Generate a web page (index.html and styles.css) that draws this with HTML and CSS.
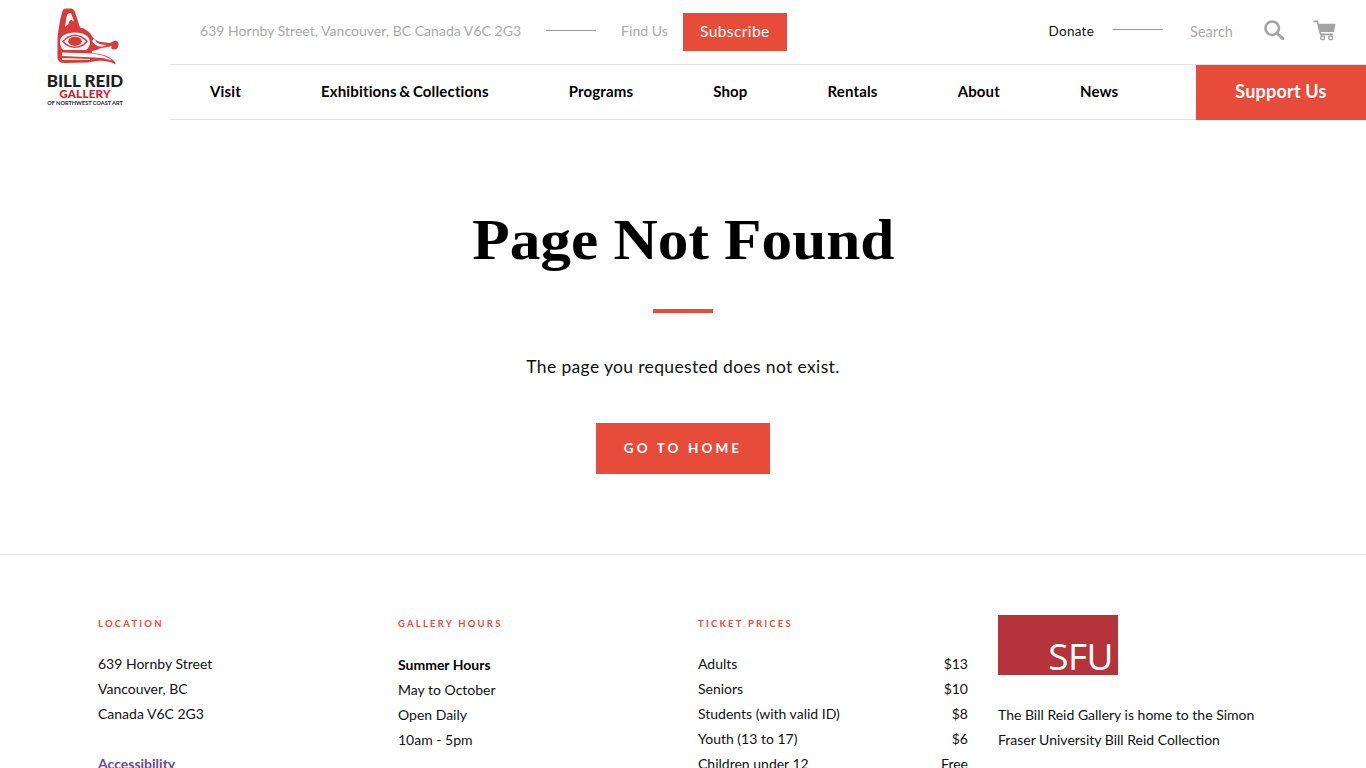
FILE: index.html
```html
<!DOCTYPE html>
<html lang="en">
<head>
<meta charset="utf-8">
<title>Page Not Found - Bill Reid Gallery</title>
<link rel="stylesheet" href="styles.css">
</head>
<body>
<header class="site-header">
  <a class="logo" href="#">
    <svg class="logo-svg" viewBox="40 0 90 112" width="90" height="112" aria-label="Bill Reid Gallery of Northwest Coast Art">
      <path class="logo-red" d="M62.5 11 Q63 8.5 66 8.5 L71.5 8.5 Q74 9 75 12 L80 27.5 Q88 29 92 36 Q95 41 101 42 L110 43 Q118 38 118.5 44 Q118.5 50 113 49.5 Q110 48.5 112 46 Q106 47.5 101 48 Q97 50.5 92 51 L92 53 L100 54 Q110 56 115 62 L115.5 64.5 Q108 60 96 61 L88 62.5 L65 63 Q58 63 57.5 58 L57.5 38 Q59 22 62.5 11 Z"/>
      <path class="logo-white" d="M65 27 L66.5 17 Q67.5 12.5 71 13 L74 21.5 L71.5 20 Q69 20 68.5 24 Z"/>
      <path class="logo-white" d="M60 41 Q61 33 75 32.5 Q89 33 90 42 Q90 47 86 50 L63 50 Q60 47 60 41 Z"/>
      <path class="logo-red" d="M62 41.5 Q68 34.5 75 34.5 Q83 35 88 41.5 Q83 48 75 48 Q67 48 62 41.5 Z"/>
      <path class="logo-white" d="M64 41.5 Q69 36 75 36 Q81 36 86 41.5 Q81 46.5 75 46.5 Q69 46.5 64 41.5 Z"/>
      <ellipse class="logo-red" cx="75" cy="41.3" rx="6.8" ry="4.6"/>
      <path class="logo-white" d="M62 52.5 L92 53.5 L101 55 Q108 57 112 60.5 Q104 57.5 95 57.5 L62 56 Z"/>
      <path class="logo-white" d="M62 58 L90 59 L90 60 L62 60 Z"/>
      <path class="logo-white" d="M94 38 Q96 43 101 44.5 L107 45 L102 46.5 Q96 47 92 41 Z"/>
      <text class="logo-t1" x="85" y="86.5">BILL REID</text>
      <text class="logo-t2" x="85" y="97.5">GALLERY</text>
      <text class="logo-t3" x="85" y="105">OF NORTHWEST COAST ART</text>
    </svg>
  </a>
  <div class="header-main">
    <div class="top-bar">
      <div class="top-group">
        <span class="top-muted">639 Hornby Street, Vancouver, BC Canada V6C 2G3</span>
        <span class="top-rule"></span>
        <a class="top-muted" href="#">Find Us</a>
        <a class="subscribe" href="#">Subscribe</a>
      </div>
      <div class="top-group top-right">
        <a class="donate" href="#">Donate</a>
        <span class="top-rule rule-right"></span>
        <span class="search-label">Search</span>
        <svg class="icon-search" viewBox="0 0 22 22" width="20" height="20" aria-hidden="true">
          <circle cx="9" cy="9" r="7.4"/>
          <path d="M14.5 14.5 L20.5 20.5"/>
        </svg>
        <svg class="icon-cart" viewBox="0 0 24 22" width="23" height="21" aria-hidden="true">
          <path class="cart-handle" d="M0.5 1.5 H4.5 L8 15 H21"/>
          <path class="cart-body" d="M5.5 4 H23.5 L22 12.5 H7.5 Z"/>
          <circle class="cart-wheel" cx="10" cy="18.5" r="2"/>
          <circle class="cart-wheel" cx="18.5" cy="18.5" r="2"/>
        </svg>
      </div>
    </div>
    <nav class="main-nav">
      <div class="nav-links">
        <a href="#">Visit</a>
        <a href="#">Exhibitions &amp; Collections</a>
        <a href="#">Programs</a>
        <a href="#">Shop</a>
        <a href="#">Rentals</a>
        <a href="#">About</a>
        <a href="#">News</a>
      </div>
      <a class="support" href="#">Support Us</a>
    </nav>
  </div>
</header>
<main class="not-found">
  <h1>Page Not Found</h1>
  <div class="accent-rule"></div>
  <p>The page you requested does not exist.</p>
  <a class="home-btn" href="#">Go to home</a>
</main>
<footer class="site-footer">
  <section class="foot-col">
    <h2>Location</h2>
    <ul class="foot-list">
      <li>639 Hornby Street</li>
      <li>Vancouver, BC</li>
      <li>Canada V6C 2G3</li>
    </ul>
    <a class="access" href="#">Accessibility</a>
  </section>
  <section class="foot-col">
    <h2>Gallery Hours</h2>
    <ul class="foot-list hours">
      <li class="strong">Summer Hours</li>
      <li>May to October</li>
      <li>Open Daily</li>
      <li>10am - 5pm</li>
    </ul>
  </section>
  <section class="foot-col">
    <h2>Ticket Prices</h2>
    <ul class="foot-list prices">
      <li><span>Adults</span><span>$13</span></li>
      <li><span>Seniors</span><span>$10</span></li>
      <li><span>Students (with valid ID)</span><span>$8</span></li>
      <li><span>Youth (13 to 17)</span><span>$6</span></li>
      <li><span>Children under 12</span><span>Free</span></li>
    </ul>
  </section>
  <section class="foot-col">
    <div class="sfu"><span>SFU</span></div>
    <p class="foot-note">The Bill Reid Gallery is home to the Simon Fraser University Bill Reid Collection</p>
  </section>
</footer>
</body>
</html>
```
FILE: styles.css
```css
* { box-sizing: border-box; }
html, body { margin: 0; padding: 0; }
body {
  height: 768px;
  overflow: hidden;
  background: #fff;
  color: #000;
  font-family: "Lato", "Liberation Sans", sans-serif;
}
a { color: inherit; text-decoration: none; }

.site-header { display: flex; height: 120px; }
.logo { width: 170px; flex: none; display: flex; padding-left: 40px; }
.logo-svg { display: block; }
.logo-red { fill: #d93a3a; }
.logo-white { fill: #fff; }
.logo-svg text { text-anchor: middle; }
.logo-t1 { font: 900 17px "Lato", sans-serif; fill: #1d1d1b; }
.logo-t2 { font: 900 11.5px "Lato", sans-serif; letter-spacing: 0.3px; fill: #c8202f; }
.logo-t3 { font: 700 5.6px "Lato", sans-serif; fill: #1d1d1b; }

.header-main { flex: 1; display: flex; flex-direction: column; }
.top-bar {
  height: 65px;
  border-bottom: 1px solid #e2e2e2;
  display: flex;
  justify-content: space-between;
  padding: 0 30px;
  align-items: center;
}
.top-group { display: flex; align-items: center; }
.top-muted { font-size: 14px; line-height: 18px; color: #a9a9a9; letter-spacing: 0.03px; margin-top: -3px; }
.top-rule { width: 50px; height: 1px; background: #999; margin: -3px 25px 0; }
.subscribe {
  margin-left: 15px;
  width: 104px;
  height: 38px;
  background: #e74c3a;
  color: #fff;
  font-size: 15.5px;
  display: flex;
  align-items: center;
  justify-content: center;
  letter-spacing: 0.4px;
  padding-bottom: 2px;
}
.top-right { padding-bottom: 2px; }
.donate { font-size: 13.5px; color: #111; letter-spacing: 0.25px; }
.rule-right { margin: -3px 27px 0 19px; }
.search-label { font-size: 14.4px; color: #aaa; margin-right: 31px; letter-spacing: 0.1px; }
.icon-search { margin-right: 29px; margin-top: -2px; fill: none; stroke: #a3a3a3; stroke-width: 2.8; }
.icon-search path { stroke-linecap: round; stroke-width: 3.2; }
.icon-cart { margin-top: -2px; }
.cart-handle { fill: none; stroke: #a3a3a3; stroke-width: 1.8; }
.cart-body { fill: #a3a3a3; }
.cart-wheel { fill: none; stroke: #a3a3a3; stroke-width: 1.4; }

.main-nav {
  height: 55px;
  border-bottom: 1px solid #e2e2e2;
  display: flex;
  justify-content: space-between;
  align-items: stretch;
}
.nav-links { display: flex; align-items: center; padding-bottom: 2px; }
.nav-links a { padding: 0 40px; font-size: 15px; font-weight: 700; color: #000; letter-spacing: 0.15px; word-spacing: -1.2px; }
.support {
  width: 170px;
  margin-bottom: -1px;
  background: #e74c3a;
  color: #fff;
  font-size: 18px;
  font-weight: 700;
  letter-spacing: 0.2px;
  padding-bottom: 4px;
  display: flex;
  align-items: center;
  justify-content: center;
}

.not-found {
  height: 435px;
  border-bottom: 1px solid #ececec;
  display: flex;
  flex-direction: column;
  align-items: center;
  padding-top: 85px;
}
.not-found h1 {
  margin: 0;
  font: 700 57px/70px "Liberation Serif", serif;
  transform: scaleX(1.075);
  color: #000;
}
.accent-rule { width: 60px; height: 4px; background: #e74c3a; margin-top: 34px; }
.not-found p { margin: 42px 0 0; font-size: 17.5px; line-height: 24px; letter-spacing: 0.35px; color: #111; }
.home-btn {
  margin-top: 44px;
  width: 174px;
  height: 51px;
  background: #e74c3a;
  color: #fff;
  font-size: 13.5px;
  font-weight: 700;
  letter-spacing: 3.1px;
  text-transform: uppercase;
  padding-bottom: 2px;
  display: flex;
  align-items: center;
  justify-content: center;
}

.site-footer { display: flex; padding: 60px 98px 0; }
.foot-col { flex: none; width: 300px; padding-right: 30px; font-size: 14px; color: #111; }
.foot-col h2 {
  margin: 4px 0 0;
  font-size: 9.5px;
  line-height: 10px;
  font-weight: 700;
  letter-spacing: 2.2px;
  text-transform: uppercase;
  color: #e74c3a;
}
.foot-list { list-style: none; margin: 22px 0 0; padding: 0; }
.foot-list li { height: 25px; line-height: 25px; }
.hours { margin-top: 23px; }
.strong { font-weight: 700; color: #000; }
.prices li { display: flex; justify-content: space-between; }
.access { display: block; margin-top: 25px; font-weight: 700; color: #6b4a96; line-height: 25px; }
.sfu {
  width: 120px;
  height: 60px;
  background: #b5333a;
  color: #fff;
  display: flex;
  align-items: flex-end;
  justify-content: flex-end;
  padding-right: 5px;
  overflow: hidden;
}
.sfu span { font: 400 37px/44px "Open Sans", sans-serif; margin-bottom: -3px; letter-spacing: -0.5px; }
.foot-note { margin: 27px 0 0; line-height: 25px; }
```
